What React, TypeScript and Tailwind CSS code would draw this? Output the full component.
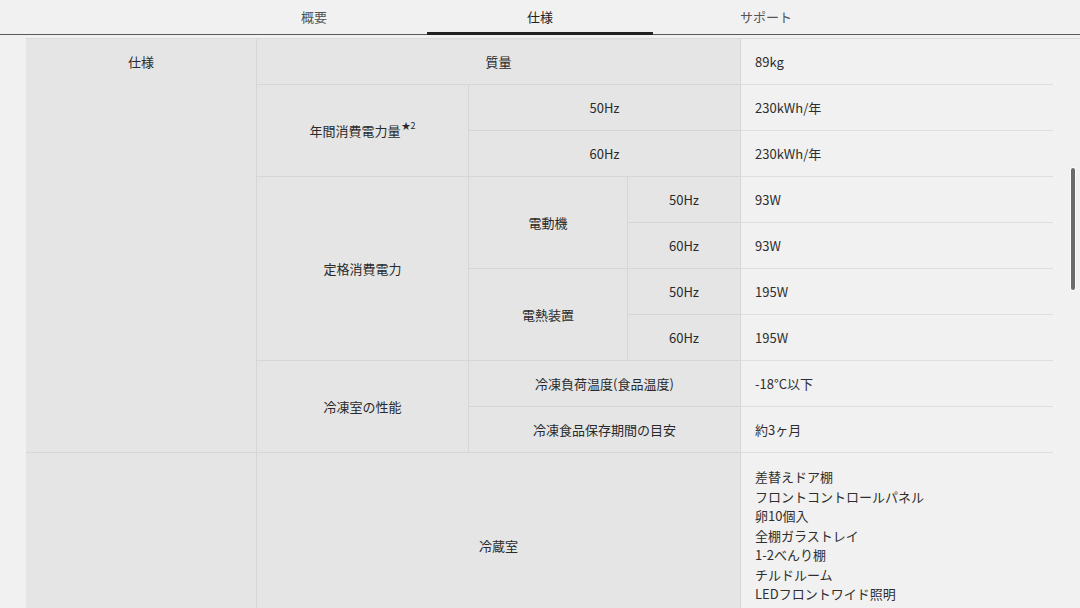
import React from "react";

const head = "flex items-center justify-center text-center bg-[#e5e5e5] border-r border-b border-[#d6d6d6] text-[#2a2a2a]";
const val = "flex items-center pl-[14px] border-b border-[#dedede] text-[#2e2e2e]";

const fridgeItems = [
  "差替えドア棚",
  "フロントコントロールパネル",
  "卵10個入",
  "全棚ガラストレイ",
  "1-2べんり棚",
  "チルドルーム",
  "LEDフロントワイド照明",
];

export default function App() {
  return (
    <div
      className="relative w-[1080px] h-[608px] overflow-hidden bg-[#f1f1f1] text-[13px]"
      style={{ fontFamily: '"Noto Sans CJK JP", "Noto Sans", sans-serif' }}
    >
      {/* Tabs */}
      <div className="h-[35px] border-b border-[#5a5a5a] flex justify-center">
        <div className="w-[226px] flex items-center justify-center text-[#555]">概要</div>
        <div className="w-[226px] flex items-center justify-center text-[#222] border-b-[3px] border-[#222] -mb-[1px] pt-[2px]">仕様</div>
        <div className="w-[226px] flex items-center justify-center text-[#555]">サポート</div>
      </div>

      {/* Spec table */}
      <div className="pl-[26px] pt-[3px]">
        <div className="grid grid-cols-[231px_212px_159px_113px_312px] grid-rows-[repeat(9,46px)_auto] border-t border-[#dadada]">
          <div className="row-span-9 flex justify-center pt-[13px] bg-[#e5e5e5] border-r border-b border-[#d6d6d6] text-[#2a2a2a]">仕様</div>

          <div className={`${head} col-span-3`}>質量</div>
          <div className={val}>89kg</div>

          <div className={`${head} row-span-2`}>
            年間消費電力量<sup className="text-[9px] -top-[5px] ml-[1px]">★2</sup>
          </div>
          <div className={`${head} col-span-2`}>50Hz</div>
          <div className={val}>230kWh/年</div>
          <div className={`${head} col-span-2`}>60Hz</div>
          <div className={val}>230kWh/年</div>

          <div className={`${head} row-span-4`}>定格消費電力</div>
          <div className={`${head} row-span-2`}>電動機</div>
          <div className={head}>50Hz</div>
          <div className={val}>93W</div>
          <div className={head}>60Hz</div>
          <div className={val}>93W</div>
          <div className={`${head} row-span-2`}>電熱装置</div>
          <div className={head}>50Hz</div>
          <div className={val}>195W</div>
          <div className={head}>60Hz</div>
          <div className={val}>195W</div>

          <div className={`${head} row-span-2`}>冷凍室の性能</div>
          <div className={`${head} col-span-2`}>冷凍負荷温度(食品温度)</div>
          <div className={val}>-18°C以下</div>
          <div className={`${head} col-span-2`}>冷凍食品保存期間の目安</div>
          <div className={val}>約3ヶ月</div>

          <div className="bg-[#e5e5e5] border-r border-b border-[#d6d6d6]" />
          <div className={`${head} col-span-3`}>冷蔵室</div>
          <div className="pl-[14px] pt-[14px] pb-[35px] leading-[19.5px] text-[#2e2e2e] border-b border-[#dedede]">
            {fridgeItems.map((t) => (
              <div key={t}>{t}</div>
            ))}
          </div>
        </div>
      </div>

      {/* Overlay scrollbar */}
      <div className="absolute left-[1071px] top-[168px] w-[4px] h-[122px] rounded-full bg-[#6c6c6c] ring-1 ring-white/70" />
    </div>
  );
}
